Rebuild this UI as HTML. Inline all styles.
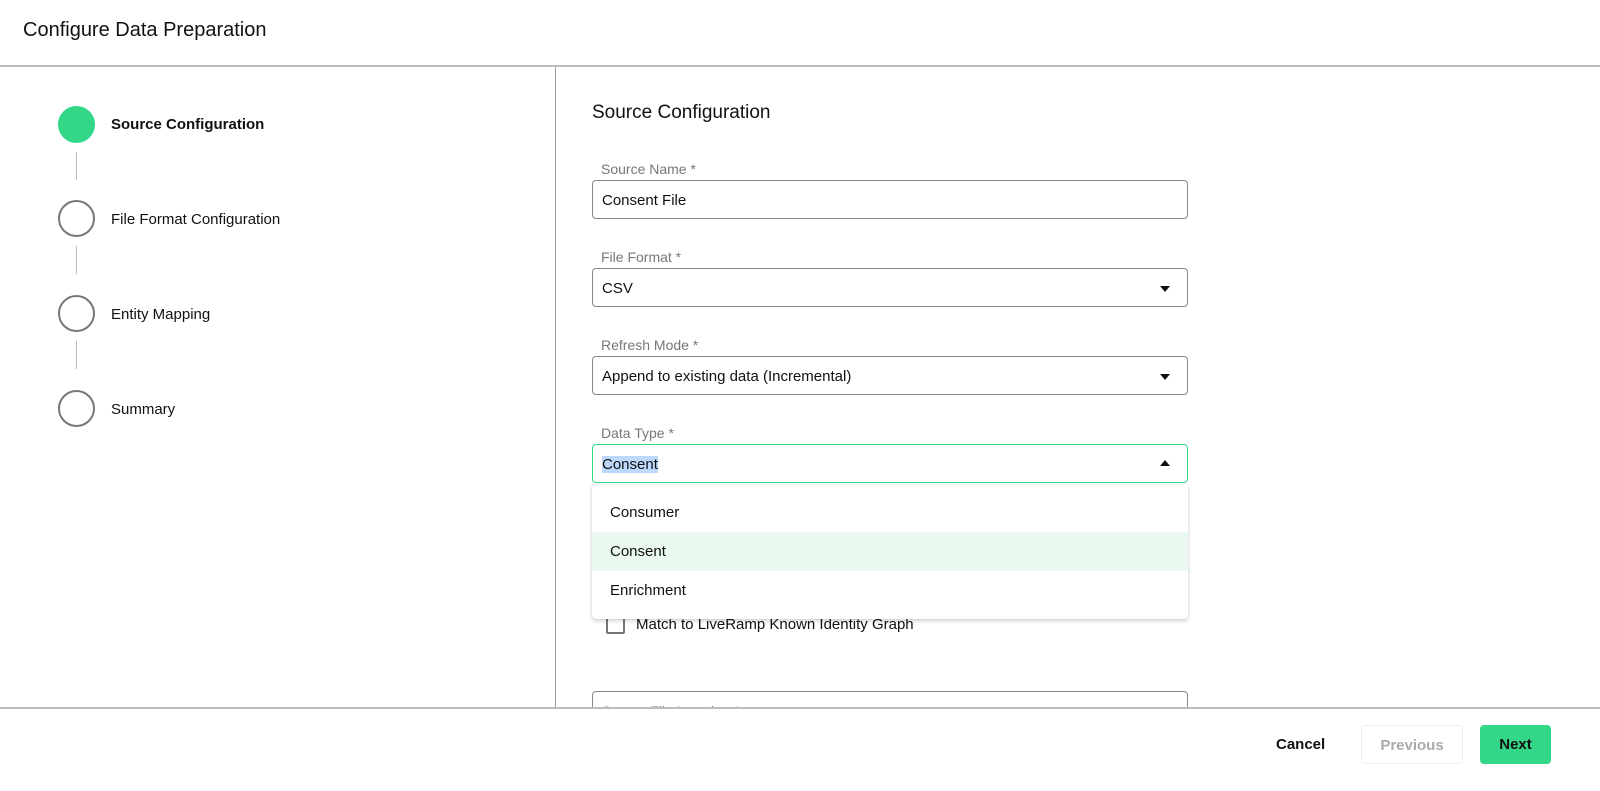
<!DOCTYPE html>
<html><head><style>
*{box-sizing:border-box;margin:0;padding:0}
body{width:1600px;height:791px;overflow:hidden;background:#fff;font-family:"Liberation Sans",Arial,sans-serif;color:#111;position:relative}
.abs{position:absolute}
.title{left:23px;top:19px;font-size:20px}
.hline{left:0;width:1600px;height:2px;background:#bdbdbd}
.vline{left:555px;top:67px;width:1px;height:641px;background:#9e9e9e}
.circ{width:37px;height:37px;border-radius:50%;border:2px solid #777;left:58px}
.conn{left:76px;width:1px;height:28px;background:#bbb}
.step{left:111px;font-size:15px}
.lab{left:601px;font-size:14px;color:#777}
.inp{left:592px;width:596px;height:39px;border:1px solid #888;border-radius:4px;font-size:15px;padding:11px 0 0 9px}
.arr{position:absolute;right:17px;top:17px;width:0;height:0;border-left:5px solid transparent;border-right:5px solid transparent;border-top:6px solid #111}
.up{border-top:none;border-bottom:6px solid #111;top:15px}
.item{left:592px;width:596px;height:39px;font-size:15px;padding:11px 0 0 18px}
</style></head><body>
<div class="abs title">Configure Data Preparation</div>
<div class="abs hline" style="top:65px"></div>
<div class="abs vline"></div>
<div class="abs circ" style="top:106px;background:#34d788;border-color:#34d788"></div>
<div class="abs step" style="top:116px;font-weight:bold">Source Configuration</div>
<div class="abs conn" style="top:152px"></div>
<div class="abs circ" style="top:200px"></div>
<div class="abs step" style="top:211px">File Format Configuration</div>
<div class="abs conn" style="top:246px"></div>
<div class="abs circ" style="top:295px"></div>
<div class="abs step" style="top:306px">Entity Mapping</div>
<div class="abs conn" style="top:341px"></div>
<div class="abs circ" style="top:390px"></div>
<div class="abs step" style="top:401px">Summary</div>

<div class="abs" style="left:592px;top:102px;font-size:19px">Source Configuration</div>
<div class="abs lab" style="top:161px">Source Name *</div>
<div class="abs inp" style="top:180px">Consent File</div>
<div class="abs lab" style="top:249px">File Format *</div>
<div class="abs inp" style="top:268px">CSV<span class="arr"></span></div>
<div class="abs lab" style="top:337px">Refresh Mode *</div>
<div class="abs inp" style="top:356px">Append to existing data (Incremental)<span class="arr"></span></div>
<div class="abs lab" style="top:425px">Data Type *</div>
<div class="abs inp" style="top:444px;border-color:#34d788"><span style="background:#bcd9fb">Consent</span><span class="arr up"></span></div>

<div class="abs" style="left:606px;top:615px;width:19px;height:19px;border:2px solid #777;border-radius:2px"></div>
<div class="abs" style="left:636px;top:616px;font-size:15px">Match to LiveRamp Known Identity Graph</div>
<div class="abs" style="left:592px;top:485px;width:596px;height:134px;background:#fff;box-shadow:0 2px 4px rgba(0,0,0,.18),0 0 1px rgba(0,0,0,.15);border-radius:0 0 4px 4px"></div>
<div class="abs item" style="top:493px">Consumer</div>
<div class="abs item" style="top:532px;background:#eaf9f0">Consent</div>
<div class="abs item" style="top:571px">Enrichment</div>
<div class="abs" style="left:592px;top:691px;width:596px;height:30px;border:1px solid #888;border-radius:4px;font-size:14px;color:#777;padding:11px 0 0 9px">Source File Location *</div>

<div class="abs" style="left:0;top:708px;width:1600px;height:83px;background:#fff"></div>
<div class="abs hline" style="top:707px"></div>
<div class="abs" style="left:1276px;top:736px;font-size:15px;font-weight:bold">Cancel</div>
<div class="abs" style="left:1361px;top:725px;width:102px;height:39px;border:1px solid #eee;border-radius:4px;font-size:15px;font-weight:bold;color:#aaa;text-align:center;padding-top:11px">Previous</div>
<div class="abs" style="left:1480px;top:725px;width:71px;height:39px;background:#34d788;border-radius:4px;font-size:15px;font-weight:bold;text-align:center;padding-top:11px">Next</div>
</body></html>
